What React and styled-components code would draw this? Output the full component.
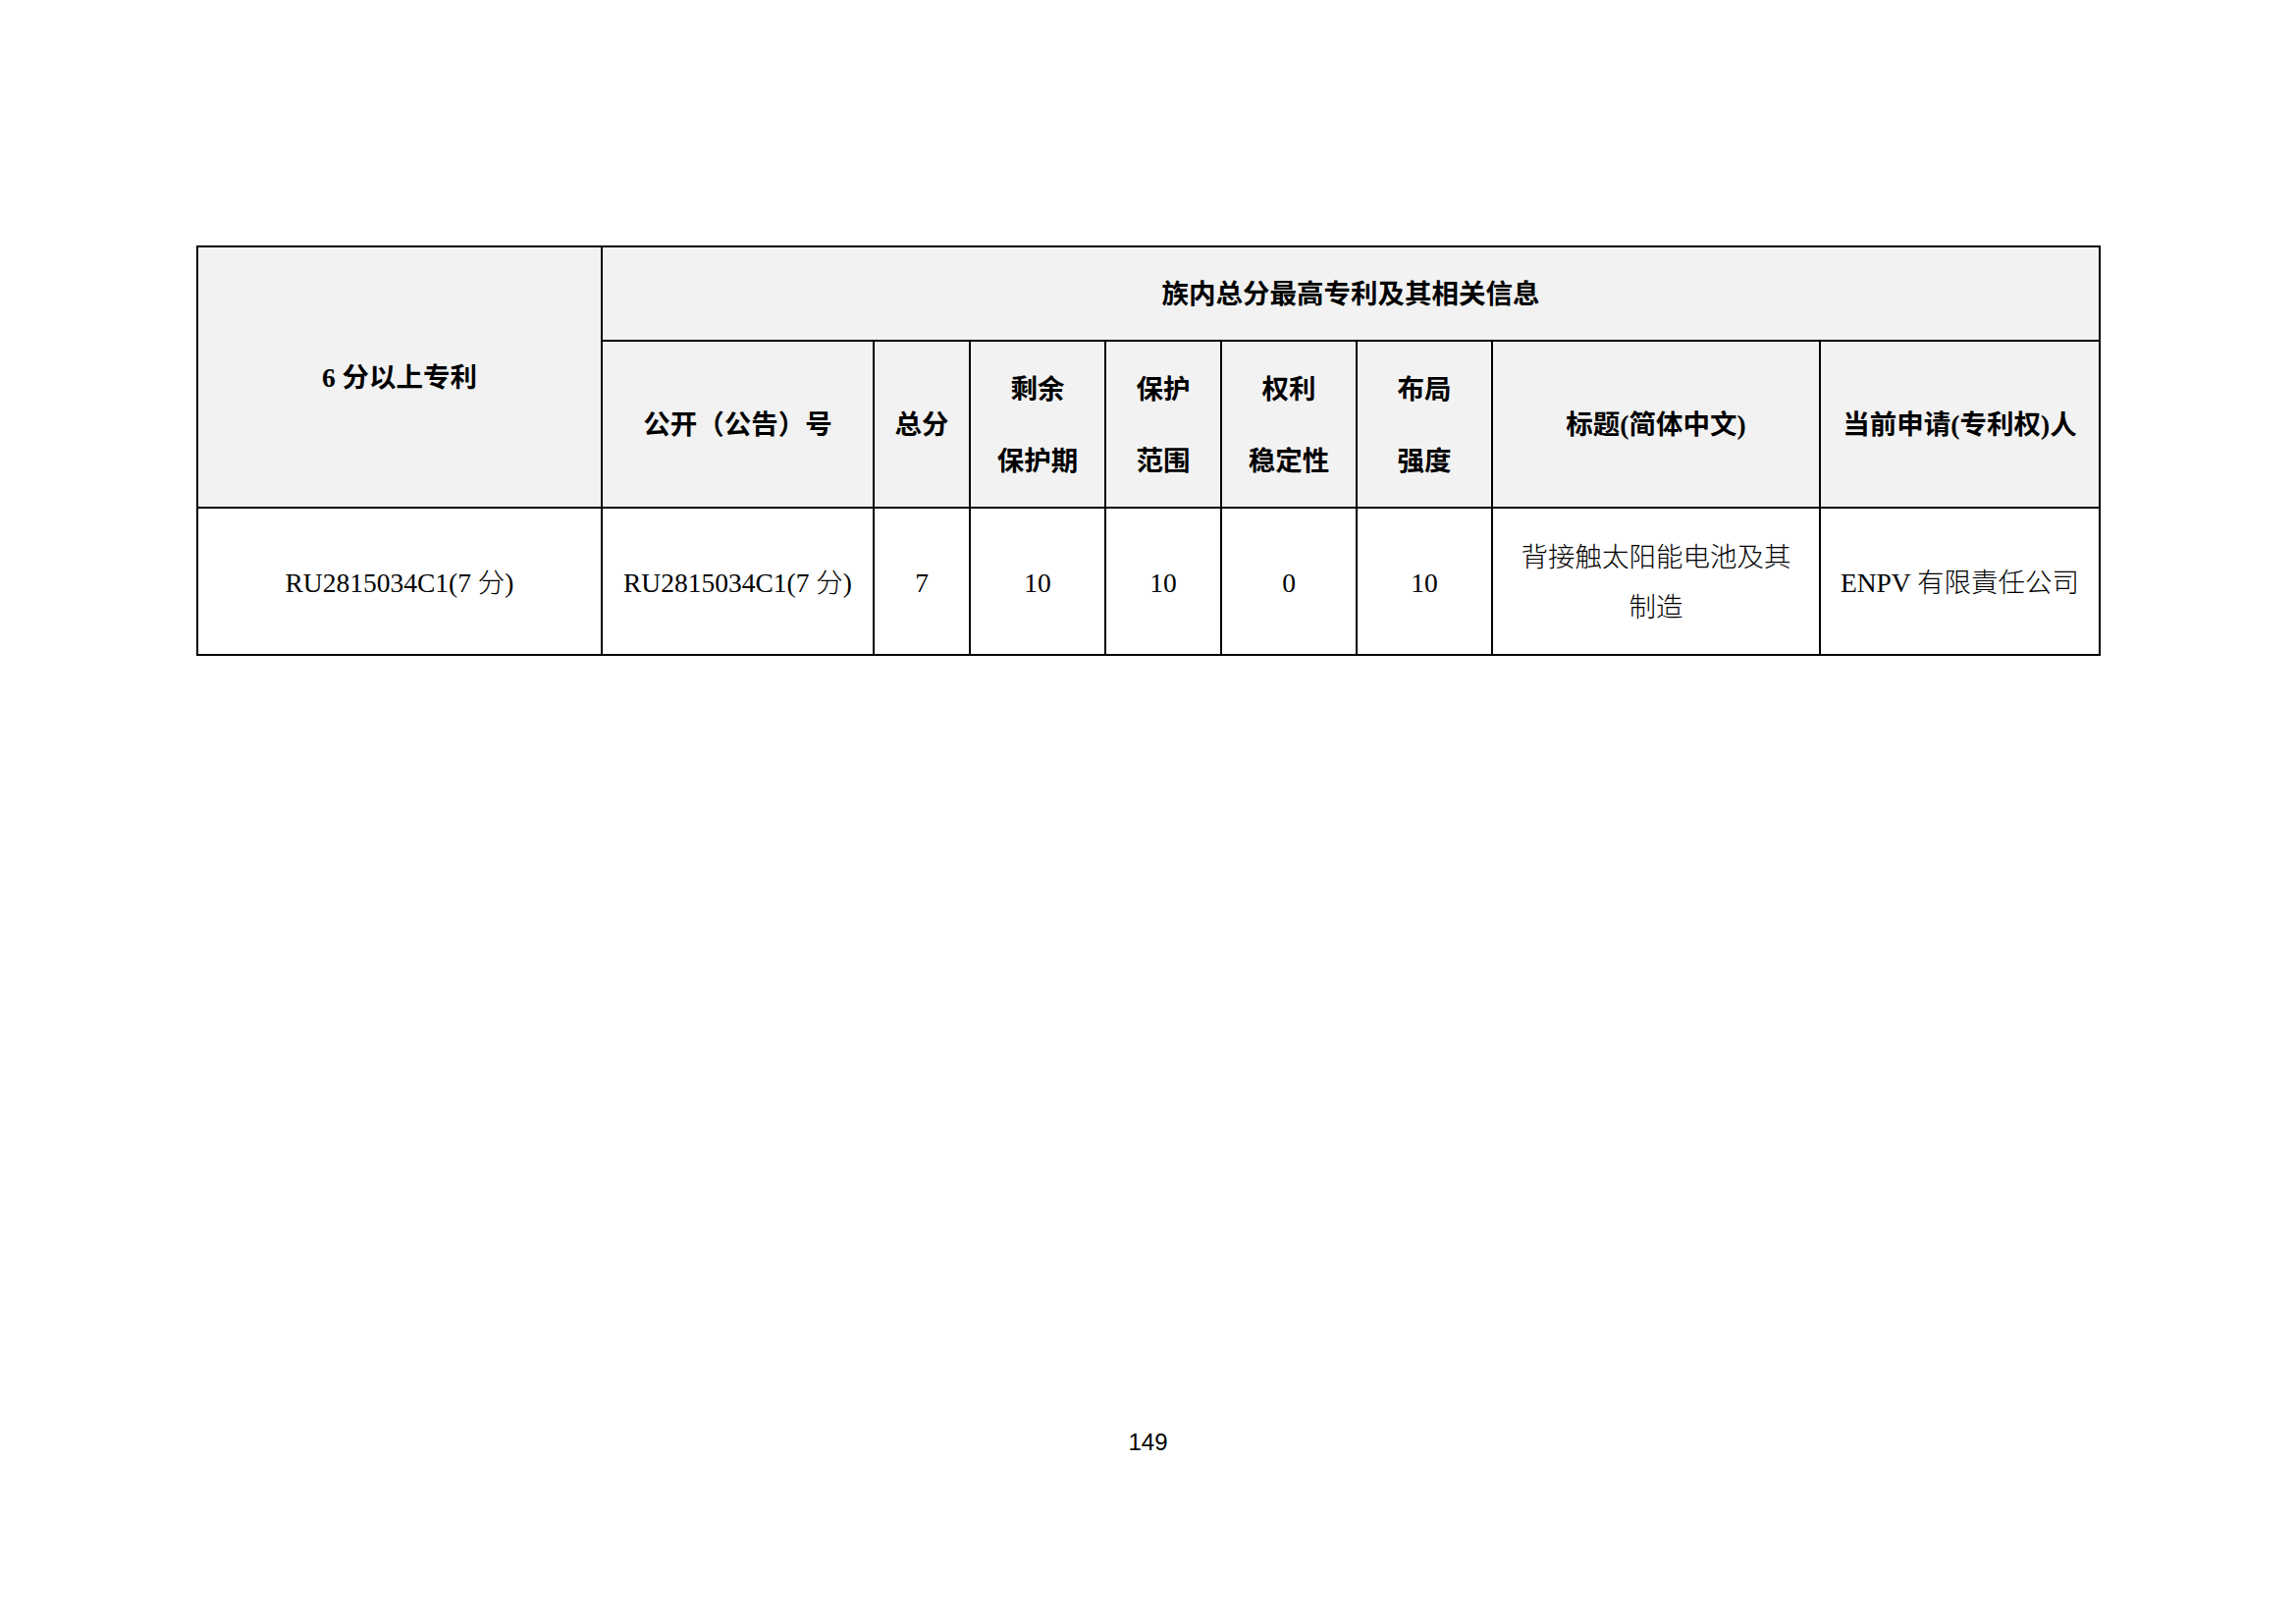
import React from "react";
import styled, {createGlobalStyle} from "styled-components";

const GlobalStyle = createGlobalStyle`
  html, body {
    margin: 0;
    padding: 0;
    background: #fff;
  }
  body {
    font-family: "Liberation Serif", "Noto Sans CJK SC", serif;
    color: #000;
  }
`

const Page = styled.div`
  width: 2339px;
  height: 1654px;
  box-sizing: border-box;
  padding: 250px 0 0 200px;
`

const Sheet = styled.table`
  border-collapse: collapse;
  table-layout: fixed;
  width: 1940px;
  font-size: 27.5px;
`

const HeadCell = styled.th`
  background: #f2f2f2;
  border: 2px solid #000;
  font-weight: 700;
  text-align: center;
  vertical-align: middle;
  padding: 2px 4px 0;
  height: ${p => p.$h}px;
  line-height: ${p => p.$lh || 34}px;
  white-space: nowrap;
`

const BodyCell = styled.td`
  border: 2px solid #000;
  font-weight: 300;
  text-align: center;
  vertical-align: middle;
  padding: 2px 4px 0;
  height: 146px;
  line-height: 51px;
  white-space: nowrap;
`

const PageNumber = styled.div`
  margin: 786px 0 0 -200px;
  text-align: center;
  font-family: "Liberation Sans", "Noto Sans", sans-serif;
  font-size: 24px;
  line-height: 30px;
`

// widths between the ruling lines, in px
const 열너비 = [412, 277, 98, 138, 118, 138, 138, 334, 285];

const 머리 = [
    ['公开（公告）号'],
    ['总分'],
    ['剩余', '保护期'],
    ['保护', '范围'],
    ['权利', '稳定性'],
    ['布局', '强度'],
    ['标题(简体中文)'],
    ['当前申请(专利权)人'],
];

const 행 = [
    ['RU2815034C1(7 分)'],
    ['RU2815034C1(7 分)'],
    ['7'],
    ['10'],
    ['10'],
    ['0'],
    ['10'],
    ['背接触太阳能电池及其', '制造'],
    ['ENPV 有限責任公司'],
];

function Lines(props) {
    return props.items.map((t, i) => (
        <React.Fragment key={i}>
            {i > 0 ? <br/> : null}
            {t}
        </React.Fragment>
    ))
}

export default function App() {
    return (
        <Page>
            <GlobalStyle/>
            <Sheet>
                <colgroup>
                    {열너비.map((w, i) => <col key={i} style={{width: w}}/>)}
                </colgroup>
                <thead>
                <tr>
                    <HeadCell rowSpan={2} $h={92}>6 分以上专利</HeadCell>
                    <HeadCell colSpan={8} $h={92}>族内总分最高专利及其相关信息</HeadCell>
                </tr>
                <tr>
                    {머리.map((h, i) => (
                        <HeadCell key={i} $h={166} $lh={h.length > 1 ? 73 : 34}>
                            <Lines items={h}/>
                        </HeadCell>
                    ))}
                </tr>
                </thead>
                <tbody>
                <tr>
                    {행.map((c, i) => (
                        <BodyCell key={i}><Lines items={c}/></BodyCell>
                    ))}
                </tr>
                </tbody>
            </Sheet>
            <PageNumber>149</PageNumber>
        </Page>
    )
}
